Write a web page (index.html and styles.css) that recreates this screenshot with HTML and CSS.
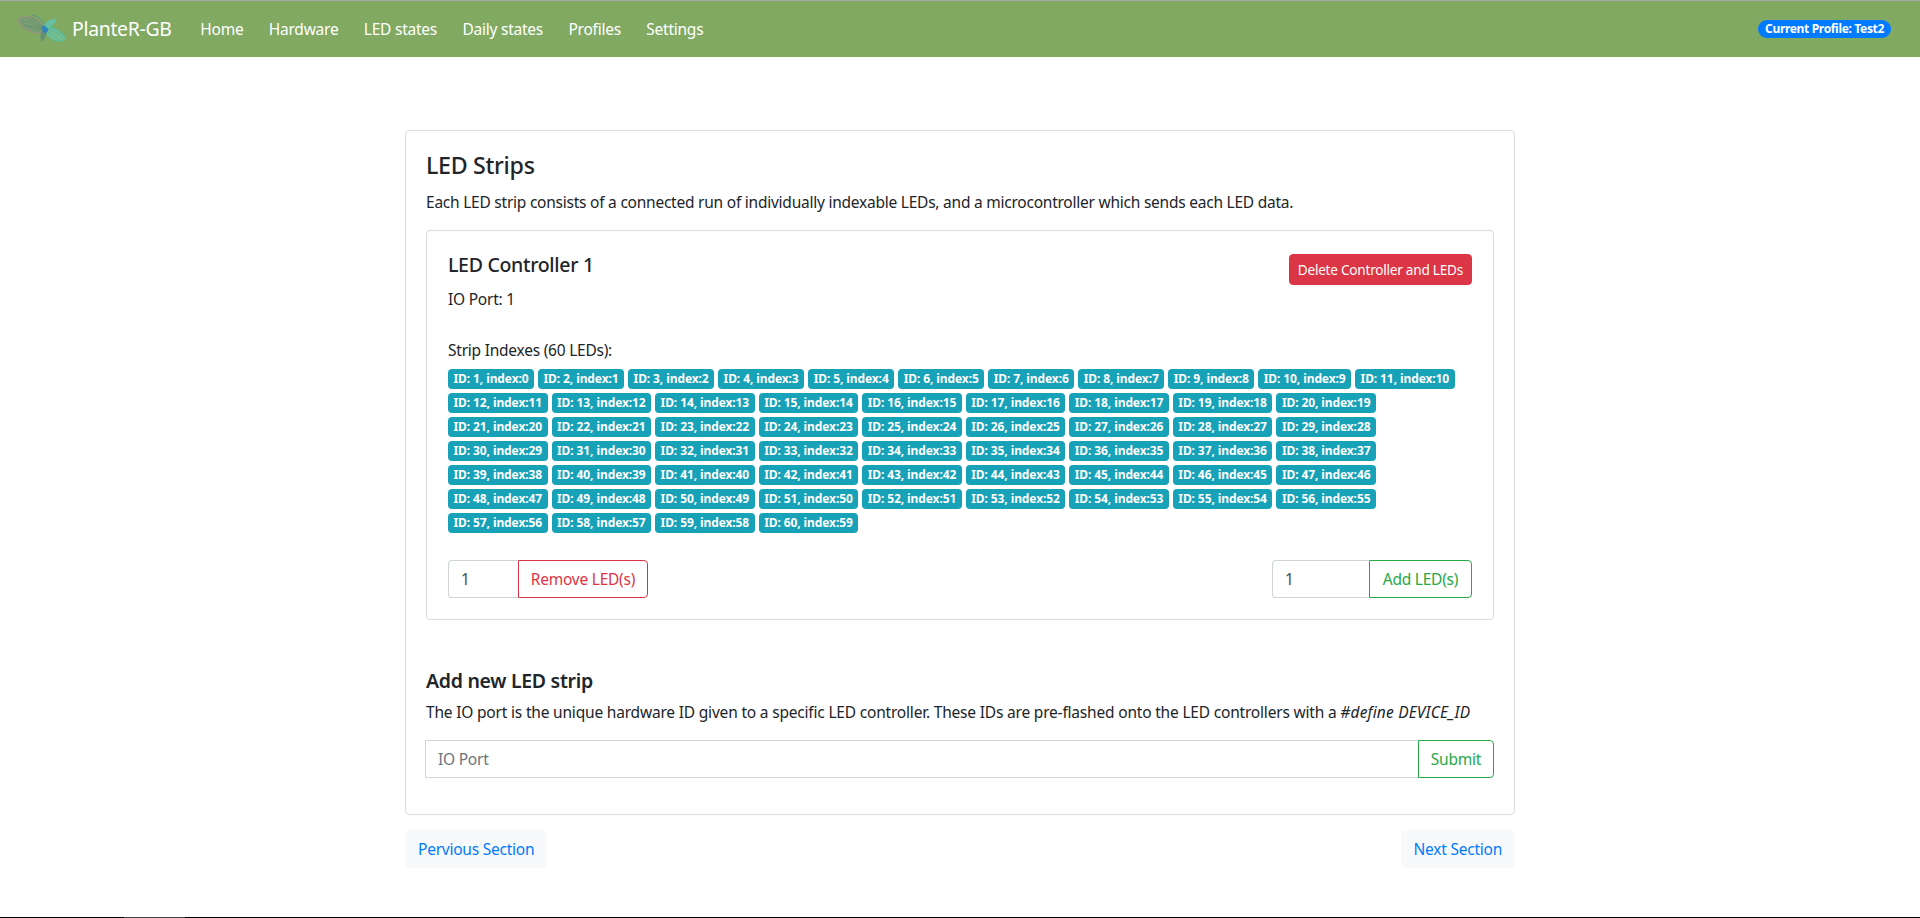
FILE: index.html
```html
<!DOCTYPE html>
<html lang="en">
<head>
  <meta charset="UTF-8">
  <title>PlanteR-GB</title>
  <link rel="stylesheet" href="styles.css">
</head>
<body>

  <header class="navbar">
    <a class="brand" href="#">
      <svg class="brand-logo" viewBox="0 0 50 30" width="50" height="30">
        <g fill="none" stroke-width="0.6">
          <path d="M0.5 6C6 1 18 0 27 13C28 16 27 18 24 19C14 20 5 14 0.5 6Z" fill="#7a9f72" stroke="#b57fa0"/>
          <path d="M4 7C11 7 19 11 25 15M9 4C14 6 21 10 26 14M14 3C18 5 23 9 27 13M5 9C11 13 17 15 23 17M8 12C13 12 20 13 25 16" stroke="#5d8a6e"/>
          <path d="M15 1.500C20 1.500 25 5 28 11" stroke="#3a86a8"/>
          <path d="M27 13C34 11 44 15 49 25C45 29 36 28 31 22C29 19 27 16 27 13Z" fill="#74bd8f" stroke="#45c0a8"/>
          <path d="M30 15C36 16 42 20 47 25M29 17C34 20 39 24 43 27M32 14C38 14 44 18 48 23" stroke="#3fb5a5"/>
          <path d="M27 12C29 8 32 6 39 5C38 10 34 13 28 15Z" fill="#69bf9f" stroke="#4ccdb0"/>
          <path d="M26 15C24 19 23 23 25 27C28 24 30 20 29 15Z" fill="#668f78" stroke="#55877c"/>
          <path d="M25 13C27 11 30 13 31 16C30 19 27 19 26 17Z" fill="#2f86c0" stroke="#2a78b8"/>
        </g>
      </svg>
      <span>PlanteR-GB</span>
    </a>
    <nav class="nav-links">
      <a href="#">Home</a>
      <a href="#">Hardware</a>
      <a href="#">LED states</a>
      <a href="#">Daily states</a>
      <a href="#">Profiles</a>
      <a href="#">Settings</a>
    </nav>
    <span class="profile-pill">Current Profile: Test2</span>
  </header>

  <main class="container">
    <section class="card">
      <h4 class="card-title">LED Strips</h4>
      <p class="card-text">Each LED strip consists of a connected run of individually indexable LEDs, and a microcontroller which sends each LED data.</p>

      <div class="card inner-card">
        <div class="controller-head">
          <div>
            <h5 class="controller-title">LED Controller 1</h5>
            <p class="controller-port">IO Port: 1</p>
          </div>
          <button class="btn btn-danger btn-sm">Delete Controller and LEDs</button>
        </div>

        <p class="strip-label">Strip Indexes (60 LEDs):</p>
        <div class="badges">
          <span class="badge">ID: 1, index:0</span>
          <span class="badge">ID: 2, index:1</span>
          <span class="badge">ID: 3, index:2</span>
          <span class="badge">ID: 4, index:3</span>
          <span class="badge">ID: 5, index:4</span>
          <span class="badge">ID: 6, index:5</span>
          <span class="badge">ID: 7, index:6</span>
          <span class="badge">ID: 8, index:7</span>
          <span class="badge">ID: 9, index:8</span>
          <span class="badge">ID: 10, index:9</span>
          <span class="badge">ID: 11, index:10</span>
          <span class="badge">ID: 12, index:11</span>
          <span class="badge">ID: 13, index:12</span>
          <span class="badge">ID: 14, index:13</span>
          <span class="badge">ID: 15, index:14</span>
          <span class="badge">ID: 16, index:15</span>
          <span class="badge">ID: 17, index:16</span>
          <span class="badge">ID: 18, index:17</span>
          <span class="badge">ID: 19, index:18</span>
          <span class="badge">ID: 20, index:19</span>
          <span class="badge">ID: 21, index:20</span>
          <span class="badge">ID: 22, index:21</span>
          <span class="badge">ID: 23, index:22</span>
          <span class="badge">ID: 24, index:23</span>
          <span class="badge">ID: 25, index:24</span>
          <span class="badge">ID: 26, index:25</span>
          <span class="badge">ID: 27, index:26</span>
          <span class="badge">ID: 28, index:27</span>
          <span class="badge">ID: 29, index:28</span>
          <span class="badge">ID: 30, index:29</span>
          <span class="badge">ID: 31, index:30</span>
          <span class="badge">ID: 32, index:31</span>
          <span class="badge">ID: 33, index:32</span>
          <span class="badge">ID: 34, index:33</span>
          <span class="badge">ID: 35, index:34</span>
          <span class="badge">ID: 36, index:35</span>
          <span class="badge">ID: 37, index:36</span>
          <span class="badge">ID: 38, index:37</span>
          <span class="badge">ID: 39, index:38</span>
          <span class="badge">ID: 40, index:39</span>
          <span class="badge">ID: 41, index:40</span>
          <span class="badge">ID: 42, index:41</span>
          <span class="badge">ID: 43, index:42</span>
          <span class="badge">ID: 44, index:43</span>
          <span class="badge">ID: 45, index:44</span>
          <span class="badge">ID: 46, index:45</span>
          <span class="badge">ID: 47, index:46</span>
          <span class="badge">ID: 48, index:47</span>
          <span class="badge">ID: 49, index:48</span>
          <span class="badge">ID: 50, index:49</span>
          <span class="badge">ID: 51, index:50</span>
          <span class="badge">ID: 52, index:51</span>
          <span class="badge">ID: 53, index:52</span>
          <span class="badge">ID: 54, index:53</span>
          <span class="badge">ID: 55, index:54</span>
          <span class="badge">ID: 56, index:55</span>
          <span class="badge">ID: 57, index:56</span>
          <span class="badge">ID: 58, index:57</span>
          <span class="badge">ID: 59, index:58</span>
          <span class="badge">ID: 60, index:59</span>
        </div>

        <div class="led-actions">
          <div class="input-group group-remove">
            <input class="form-control" type="text" value="1">
            <button class="btn btn-outline-danger">Remove LED(s)</button>
          </div>
          <div class="input-group group-add">
            <input class="form-control" type="text" value="1">
            <button class="btn btn-outline-success">Add LED(s)</button>
          </div>
        </div>
      </div>

      <h5 class="new-title">Add new LED strip</h5>
      <p class="new-text">The IO port is the unique hardware ID given to a specific LED controller. These IDs are pre-flashed onto the LED controllers with a <em>#define DEVICE_ID</em></p>
      <div class="input-group group-new">
        <input class="form-control" type="text" placeholder="IO Port">
        <button class="btn btn-outline-success">Submit</button>
      </div>
    </section>

    <div class="section-nav">
      <a class="btn btn-light" href="#">Pervious Section</a>
      <a class="btn btn-light" href="#">Next Section</a>
    </div>
  </main>

  <div class="bottom-edge"><span></span></div>

</body>
</html>
```

FILE: styles.css
```css
* {
  box-sizing: border-box;
}

html, body {
  height: 100%;
  overflow: hidden;
}

body {
  margin: 0;
  display: flex;
  flex-direction: column;
  font-family: "Noto Sans", "Open Sans", sans-serif;
  font-size: 15.5px;
  line-height: 24px;
  letter-spacing: -0.235px;
  color: #212529;
  background: #fff;
}

/* navbar */
.navbar {
  height: 57px;
  flex: none;
  display: flex;
  align-items: center;
  padding: 0 29px 0 17px;
  border-top: 1px solid #a9a9a9;
  background-color: #81a962;
}

.brand {
  display: flex;
  align-items: center;
  gap: 5px;
  color: #fff;
  font-size: 19.4px;
  letter-spacing: -0.3px;
  text-decoration: none;
}

.brand-logo {
  display: block;
}

.nav-links {
  display: flex;
  margin-left: 16px;
}

.nav-links a {
  padding: 0 12.7px;
  color: #fff;
  text-decoration: none;
}

.profile-pill {
  margin-left: auto;
  padding: 0 7px;
  height: 18px;
  line-height: 18px;
  border-radius: 9px;
  background: #007bff;
  color: #fff;
  font-size: 12px;
  letter-spacing: -0.33px;
  font-weight: 700;
}

/* content */
.container {
  width: 1110px;
  margin: 73px auto 0;
}

.card {
  border: 1px solid #dcdcdc;
  border-radius: 4px;
  background: #fff;
}

.container > .card {
  padding: 21px 20px 36px;
}

.card-title {
  margin: 0 0 11px;
  font-size: 23.2px;
  line-height: 27px;
  letter-spacing: -0.3px;
  font-weight: 500;
}

.card-text {
  margin: 0 0 16px;
}

.inner-card {
  padding: 20px 21px 21px;
}

.controller-head {
  display: flex;
  justify-content: space-between;
  align-items: flex-start;
}

.controller-title {
  margin: 2px 0 10px;
  font-size: 19.5px;
  line-height: 24px;
  letter-spacing: -0.3px;
  font-weight: 500;
}

.controller-port {
  margin: 0;
}

.strip-label {
  margin: 27px 0 7px;
}

.badges {
  display: flex;
  flex-wrap: wrap;
  gap: 4px;
}

.badge {
  height: 20px;
  padding: 0 5.5px;
  border-radius: 4px;
  background: #17a2b8;
  color: #fff;
  font-size: 12px;
  line-height: 20px;
  letter-spacing: -0.1px;
  font-weight: 700;
  white-space: nowrap;
}

.led-actions {
  display: flex;
  justify-content: space-between;
  margin-top: 27px;
}

.input-group {
  display: flex;
  height: 38px;
}

.form-control {
  min-width: 0;
  width: 100%;
  padding: 0 12px;
  border: 1px solid #ced4da;
  border-right: 0;
  border-radius: 4px 0 0 4px;
  background: #fff;
  color: #495057;
  font: inherit;
  letter-spacing: inherit;
  outline: 0;
}

.form-control::placeholder {
  color: #6c757d;
  opacity: 1;
}

.btn {
  display: block;
  padding: 0 12px;
  border: 1px solid transparent;
  border-radius: 4px;
  background: none;
  font: inherit;
  letter-spacing: inherit;
  line-height: 36px;
  text-align: center;
  text-decoration: none;
  white-space: nowrap;
}

.input-group .btn {
  flex: 1;
  padding: 0;
  border-radius: 0 4px 4px 0;
}

.btn-sm {
  height: 31px;
  margin-top: 3px;
  padding: 0 8px;
  font-size: 13.6px;
  letter-spacing: -0.24px;
  line-height: 29px;
}

.btn-danger {
  background: #dc3545;
  border-color: #dc3545;
  color: #fff;
}

.btn-outline-danger {
  border-color: #dc3545;
  color: #dc3545;
}

.btn-outline-success {
  border-color: #28a745;
  color: #28a745;
}

.btn-light {
  background: #f8f9fa;
  border-color: #f8f9fa;
  color: #007bff;
}

.group-remove,
.group-add {
  width: 200px;
}

.group-remove .form-control {
  flex: 0 0 70px;
}

.group-add .form-control {
  flex: 0 0 97px;
}

.group-new {
  margin-left: -1px;
}

.group-new .form-control {
  flex: 1;
  border-radius: 0;
}

.input-group.group-new .btn {
  flex: 0 0 76px;
}

.new-title {
  margin: 49px 0 7px;
  font-size: 19.5px;
  line-height: 24px;
  letter-spacing: -0.3px;
  font-weight: 600;
}

.new-text {
  margin: 0 0 16px;
  letter-spacing: -0.19px;
}

.new-text em {
  letter-spacing: 0.18px;
}

.section-nav {
  display: flex;
  justify-content: space-between;
  margin-top: 15px;
}

/* line along the bottom of the window */
.bottom-edge {
  margin-top: auto;
  height: 1px;
  flex: none;
  background: #000;
}

.bottom-edge span {
  display: block;
  width: 61px;
  height: 1px;
  margin-left: 124px;
  background: #444;
}
```
